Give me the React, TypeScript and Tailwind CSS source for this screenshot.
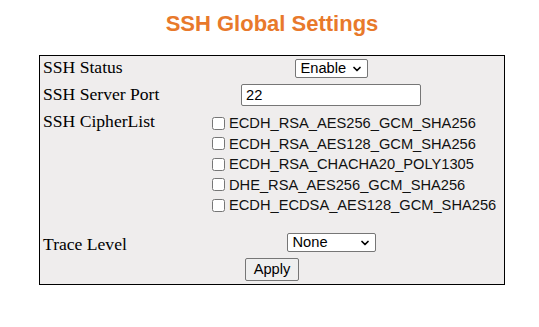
import React from 'react';
import { ChevronDown } from 'lucide-react';

const ciphers = [
  'ECDH_RSA_AES256_GCM_SHA256',
  'ECDH_RSA_AES128_GCM_SHA256',
  'ECDH_RSA_CHACHA20_POLY1305',
  'DHE_RSA_AES256_GCM_SHA256',
  'ECDH_ECDSA_AES128_GCM_SHA256',
];

const sans = "font-['Liberation_Sans',Arial,sans-serif]";
const serif = "font-['Liberation_Serif','Times_New_Roman',serif]";

function Select({ value, options, width }: { value: string; options: string[]; width: string }) {
  return (
    <div className={`relative ${width} h-[19px]`}>
      <select
        defaultValue={value}
        className={`${sans} block ${width} h-[19px] appearance-none rounded-[2px] border border-[#767676] bg-white py-0 pl-[5px] text-[14.67px] leading-[17px] text-black outline-none`}
      >
        {options.map((o) => (
          <option key={o}>{o}</option>
        ))}
      </select>
      {/* chevron */}
      <ChevronDown
        size={12}
        strokeWidth={3.5}
        className="pointer-events-none absolute right-[5px] top-1/2 -translate-y-1/2 text-black"
      />
    </div>
  );
}

export default function App() {
  return (
    <div className="min-h-screen bg-white">
      <h1 className={`${sans} pt-[11px] pl-[5px] text-center text-[22px] leading-[25px] font-bold text-[#e8792b]`}>
        SSH Global Settings
      </h1>

      <div className="ml-[39px] mt-[19px] flex h-[230px] w-[466px] flex-col border border-black bg-[#efeded]">
        {/* SSH Status */}
        <div className="flex h-[26px] shrink-0">
          <div className={`${serif} mt-[1px] w-[118px] shrink-0 whitespace-nowrap pl-[3px] text-[17.6px] leading-[20px] text-black`}>
            SSH Status
          </div>
          <div className="mt-[3px] flex flex-1 justify-center">
            <Select value="Enable" options={['Enable', 'Disable']} width="w-[73px]" />
          </div>
        </div>

        {/* Port */}
        <div className="flex h-[26px] shrink-0">
          <div className={`${serif} mt-[2px] w-[118px] shrink-0 whitespace-nowrap pl-[3px] text-[17.6px] leading-[20px] text-black`}>
            SSH Server Port
          </div>
          <div className="mt-[2px] flex flex-1 items-start justify-center">
            <input
              defaultValue="22"
              className={`${sans} block h-[22px] w-[180px] rounded-[2px] border border-[#767676] bg-white px-[4px] text-[14.67px] text-black outline-none`}
            />
          </div>
        </div>

        {/* Cipher list */}
        <div className="flex h-[122px] shrink-0">
          <div className={`${serif} mt-[3px] w-[118px] shrink-0 whitespace-nowrap pl-[3px] text-[17.6px] leading-[20px] text-black`}>
            SSH CipherList
          </div>
          <div className="mt-[5px] flex flex-1 flex-col pl-[54px]">
            {ciphers.map((c) => (
              <label key={c} className={`${sans} flex h-[20.5px] items-center gap-[4px] whitespace-nowrap text-[14.67px] leading-[20.5px] text-[#111]`}>
                <input
                  type="checkbox"
                  className="block h-[13px] w-[13px] shrink-0 appearance-none rounded-[2.5px] border border-[#767676] bg-white"
                />
                <span>{c}</span>
              </label>
            ))}
          </div>
        </div>

        {/* Trace level */}
        <div className="flex h-[26px] shrink-0">
          <div className={`${serif} mt-[4px] w-[118px] shrink-0 whitespace-nowrap pl-[3px] text-[17.6px] leading-[20px] text-black`}>
            Trace Level
          </div>
          <div className="mt-[3px] flex flex-1 items-start justify-center">
            <Select value="None" options={['None', 'Error', 'Warning', 'Info', 'Debug']} width="w-[89px]" />
          </div>
        </div>

        {/* Apply */}
        <div className="flex flex-1 items-start justify-center pt-[2px]">
          <button
            className={`${sans} block h-[23px] w-[54px] rounded-[2px] border border-[#767676] bg-[#efefef] text-[14.67px] leading-[21px] text-black`}
          >
            Apply
          </button>
        </div>
      </div>
    </div>
  );
}
